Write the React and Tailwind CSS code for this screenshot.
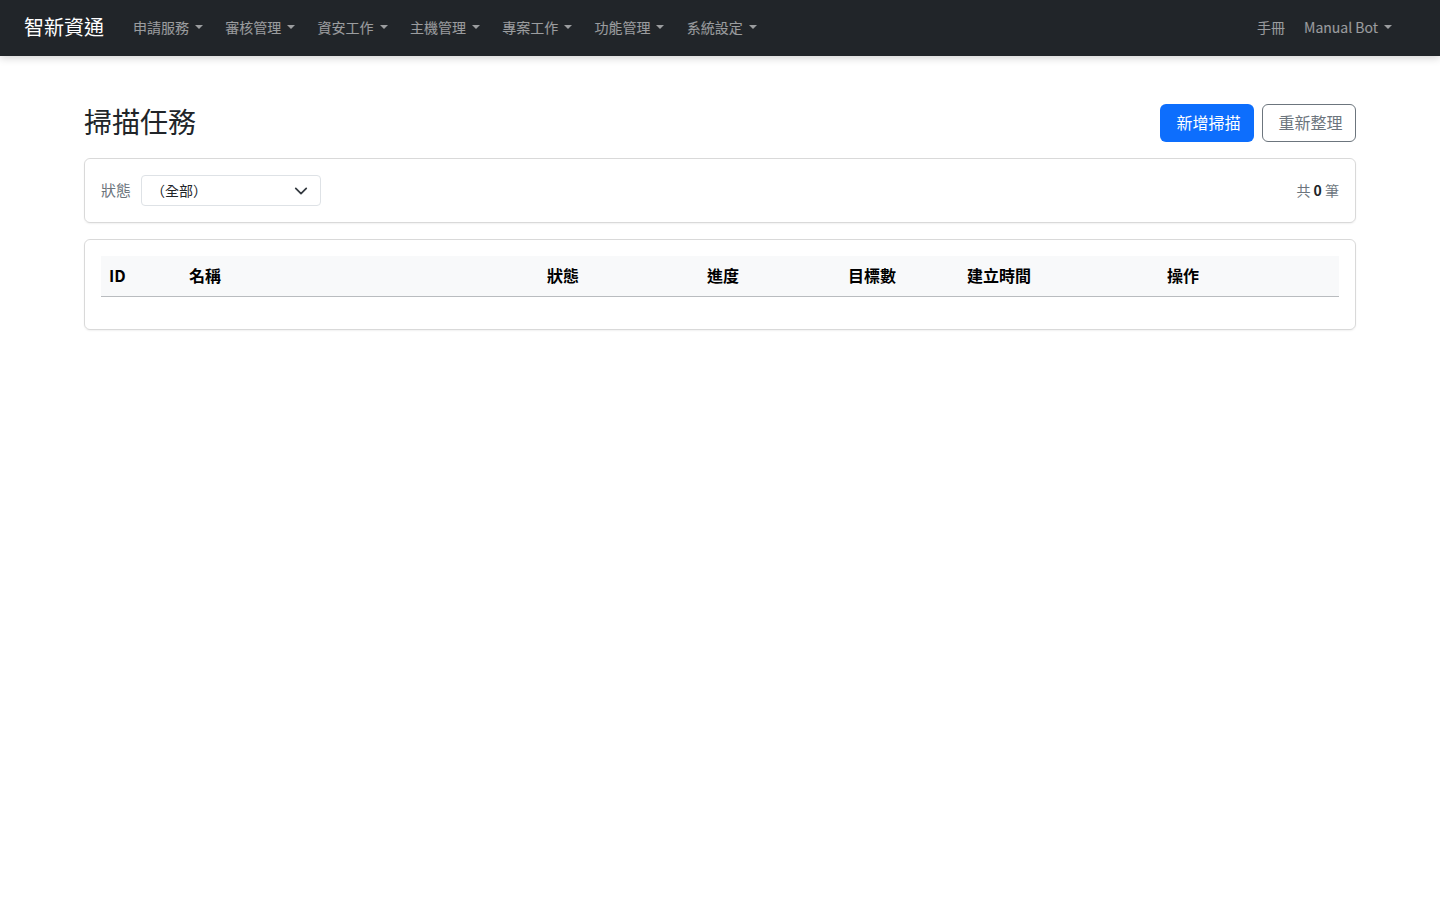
const font = { fontFamily: '"Noto Sans CJK TC", "Noto Sans", sans-serif' };

function Caret() {
  return (
    <span className="ml-[6px] inline-block h-0 w-0 border-x-[4px] border-t-[4.5px] border-x-transparent border-t-current align-middle" />
  );
}

const navItems = ["申請服務", "審核管理", "資安工作", "主機管理", "專案工作", "功能管理", "系統設定"];

const columns = [
  { label: "ID", w: "w-[80px]" },
  { label: "名稱", w: "w-[358px]" },
  { label: "狀態", w: "w-[160px]" },
  { label: "進度", w: "w-[141px]" },
  { label: "目標數", w: "w-[119px]" },
  { label: "建立時間", w: "w-[200px]" },
  { label: "操作", w: "w-[180px]" },
];

export default function App() {
  return (
    <div className="min-h-screen bg-white text-[#212529]" style={font}>
      {/* Navbar */}
      <nav className="relative z-10 flex h-14 items-center justify-between bg-[#212529] pb-[2px] pl-6 pr-[40px] shadow-[0_2px_8px_rgba(0,0,0,0.18)]">
        <div className="flex items-center">
          <span className="mr-[21px] text-[20px] leading-none text-white">智新資通</span>
          <div className="flex items-center gap-[6.3px]">
            {navItems.map((item) => (
              <span key={item} className="flex items-center px-2 text-[14px] leading-none text-white/55">
                {item}
                <Caret />
              </span>
            ))}
          </div>
        </div>
        <div className="flex items-center gap-[3px]">
          <span className="px-2 text-[14px] leading-none text-white/55">手冊</span>
          <span className="flex items-center px-2 text-[14px] leading-none text-white/55">
            Manual Bot
            <Caret />
          </span>
        </div>
      </nav>

      {/* Main */}
      <main className="mx-auto max-w-[1320px] px-6 pt-12">
        <div className="mb-4 flex items-center justify-between">
          <h3 className="pb-[2px] text-[28px] leading-[1.2] font-normal">掃描任務</h3>
          <div className="flex gap-2">
            <button className="h-[38px] w-[94px] rounded-md bg-[#0d6efd] pb-[3px] pl-[3px] text-[16px] text-white">新增掃描</button>
            <button className="h-[38px] w-[94px] rounded-md border border-[#6c757d] pb-[3px] pl-[3px] text-[16px] text-[#6c757d]">重新整理</button>
          </div>
        </div>

        {/* Filter card */}
        <div className="mb-4 flex items-center justify-between rounded-md border border-black/15 p-4 shadow-[0_1px_2px_rgba(0,0,0,0.06)]">
          <div className="flex items-center gap-[10px]">
            <span className="text-[15px] text-[#6c757d]">狀態</span>
            <div className="flex h-[31px] w-[180px] items-center justify-between rounded border border-[#dee2e6] pl-[9px] pr-[12px] text-[14px]">
              <span>（全部）</span>
              <svg width="14" height="14" viewBox="0 0 16 16" fill="none" stroke="#343a40" strokeWidth="2" strokeLinecap="round" strokeLinejoin="round">
                <path d="M2 5l6 6 6-6" />
              </svg>
            </div>
          </div>
          <span className="text-[14px] text-[#6c757d]">
            共 <span className="font-bold text-[#212529]">0</span> 筆
          </span>
        </div>

        {/* Table card */}
        <div className="rounded-md border border-black/15 p-4 shadow-[0_1px_2px_rgba(0,0,0,0.06)]">
          <div className="mb-4 flex h-[41px] items-center border-b border-[#b9bcbf] bg-[#f8f9fa]">
            {columns.map((c) => (
              <div key={c.label} className={`${c.w} px-2 pb-[2px] text-[16px] font-bold text-black`}>
                {c.label}
              </div>
            ))}
          </div>
        </div>
      </main>
    </div>
  );
}
